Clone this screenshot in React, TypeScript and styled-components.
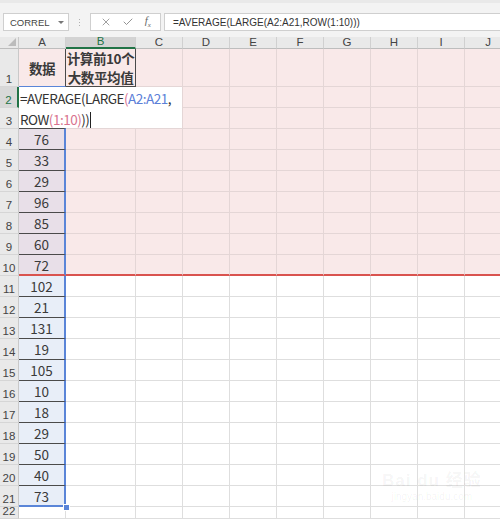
import React from "react";
import styled, { createGlobalStyle } from "styled-components";
import { X, Check } from "lucide-react";

const GlobalStyle = createGlobalStyle`
  body {
    margin: 0;
    background: #ffffff;
  }
`;

const Page = styled.div`
  width: 500px;
  height: 519px;
  overflow: hidden;
  font-family: "Liberation Sans", "Noto Sans CJK SC", sans-serif;
  color: #333;
  position: relative;
`;

const Toolbar = styled.div`
  height: 37px;
  box-sizing: border-box;
  background: linear-gradient(#e9e9e9 0, #e9e9e9 3px, #f3f3f3 3px);
  display: flex;
  align-items: flex-start;
  padding: 13px 0 0 3px;
`;

const NameBox = styled.div`
  width: 66px;
  height: 18px;
  box-sizing: border-box;
  background: #fff;
  border: 1px solid #cfcfcf;
  display: flex;
  align-items: center;
  justify-content: space-between;
  padding: 0 4px 0 6px;
  font-size: 9.5px;
  color: #444;
`;

const Caret = styled.span`
  width: 0;
  height: 0;
  border-left: 3px solid transparent;
  border-right: 3px solid transparent;
  border-top: 3px solid #777;
`;

const Grip = styled.div`
  width: 21px;
  height: 18px;
  display: flex;
  flex-direction: column;
  align-items: center;
  justify-content: center;
  gap: 2px;
  span {
    width: 1px;
    height: 1px;
    background: #b0b0b0;
  }
`;

const IconBox = styled.div`
  width: 71px;
  height: 18px;
  box-sizing: border-box;
  background: #fff;
  border: 1px solid #cfcfcf;
  display: flex;
  align-items: center;
  justify-content: space-around;
  padding: 0 4px;
  color: #777;
`;

const Fx = styled.span`
  font-family: "Liberation Serif", serif;
  font-style: italic;
  font-size: 11px;
  color: #666;
  sub {
    font-size: 7px;
  }
`;

const FormulaBox = styled.div`
  flex: 1;
  margin-left: 3px;
  height: 18px;
  box-sizing: border-box;
  background: #fff;
  border: 1px solid #cfcfcf;
  border-right: none;
  display: flex;
  align-items: center;
  padding-left: 8px;
  font-size: 10px;
  color: #333;
`;

const Sheet = styled.div`
  position: relative;
  display: grid;
  grid-template-columns: 19px 47px 70px repeat(8, 47px);
  grid-template-rows: 12px 38px repeat(20, 21px) 12px;
`;

const Corner = styled.div`
  background: #e9e9e9;
  border-right: 1px solid #c9c9c9;
  border-bottom: 1px solid #bdbdbd;
  box-sizing: border-box;
  position: relative;
  &::after {
    content: "";
    position: absolute;
    right: 2px;
    bottom: 2px;
    border-left: 8px solid transparent;
    border-bottom: 8px solid #bcbcbc;
  }
`;

const ColHead = styled.div<{ $active?: boolean }>`
  box-sizing: border-box;
  background: ${(p) => (p.$active ? "#d3d3d3" : "#e9e9e9")};
  color: ${(p) => (p.$active ? "#217346" : "#444")};
  border-right: 1px solid #d0d0d0;
  border-bottom: ${(p) => (p.$active ? "2px solid #217346" : "1px solid #bdbdbd")};
  display: flex;
  align-items: center;
  justify-content: center;
  font-size: 11.5px;
  line-height: 1;
`;

const RowHead = styled.div<{ $active?: boolean }>`
  box-sizing: border-box;
  background: ${(p) => (p.$active ? "#d8d8d8" : "#e9e9e9")};
  color: ${(p) => (p.$active ? "#217346" : "#444")};
  border-right: ${(p) => (p.$active ? "2px solid #217346" : "1px solid #c9c9c9")};
  border-bottom: 1px solid #d6d6d6;
  display: flex;
  align-items: flex-end;
  justify-content: center;
  padding-bottom: 1px;
  font-size: 11.5px;
  line-height: 1;
`;

const Cell = styled.div<{
  $fill: string;
  $grid: string;
  $right?: string;
  $bottom?: string;
  $bold?: boolean;
}>`
  box-sizing: border-box;
  background: ${(p) => p.$fill};
  border-right: ${(p) => p.$right || `1px solid ${p.$grid}`};
  border-bottom: ${(p) => p.$bottom || `1px solid ${p.$grid}`};
  display: flex;
  align-items: center;
  justify-content: center;
  text-align: center;
  white-space: nowrap;
  overflow: hidden;
  font-family: "Noto Sans CJK SC", sans-serif;
  font-size: 13.5px;
  font-weight: ${(p) => (p.$bold ? 700 : 400)};
  letter-spacing: ${(p) => (p.$bold ? "-0.4px" : "0")};
  line-height: 19px;
  color: #3a3a3a;
  padding-top: 1px;
`;

const EditBox = styled.div`
  position: absolute;
  left: 19px;
  top: 50px;
  width: 163px;
  height: 41px;
  background: #fff;
  box-sizing: border-box;
  padding: 1px 0 0 1px;
  font-family: "Noto Sans CJK SC", sans-serif;
  font-size: 13.5px;
  letter-spacing: -0.5px;
  line-height: 21px;
  color: #333;
  white-space: nowrap;
`;

const Ref = styled.span<{ $tone: "blue" | "red" }>`
  color: ${(p) => (p.$tone === "blue" ? "#5b80d8" : "#d9738f")};
`;

const Cursor = styled.span`
  display: inline-block;
  width: 1px;
  height: 16px;
  background: #222;
  vertical-align: -3px;
  margin-left: 1px;
`;

const Handle = styled.div`
  position: absolute;
  left: 63px;
  top: 467px;
  width: 5px;
  height: 5px;
  background: #5a85d8;
  border: 1px solid #fff;
`;

const Watermark = styled.div`
  position: absolute;
  left: 382px;
  top: 466px;
  color: rgba(0, 0, 0, 0.05);
  display: flex;
  flex-direction: column;
  align-items: center;
  pointer-events: none;
`;

const MarkTitle = styled.div`
  font-family: "Liberation Sans", "Noto Sans CJK SC", sans-serif;
  font-weight: 700;
  font-size: 17px;
  letter-spacing: 1px;
`;

const MarkUrl = styled.div`
  font-family: "Liberation Sans", sans-serif;
  font-size: 10px;
`;

const cols = ["A", "B", "C", "D", "E", "F", "G", "H", "I", "J"];

const values: Record<number, string> = {
  4: "76",
  5: "33",
  6: "29",
  7: "96",
  8: "85",
  9: "60",
  10: "72",
  11: "102",
  12: "21",
  13: "131",
  14: "19",
  15: "105",
  16: "10",
  17: "18",
  18: "29",
  19: "50",
  20: "40",
  21: "73",
};

const PINK = "#f9e9e9";
const PINK_GRID = "#e4d6d6";
const WHITE_GRID = "#dedede";
const DARK = "1px solid #4a4a4a";
const BLUE = "2px solid #5a85d8";
const RED = "2px solid #d9534f";

function cellProps(row: number, ci: number) {
  const pink = row <= 10;
  let fill = pink ? PINK : "#ffffff";
  const grid = pink ? PINK_GRID : WHITE_GRID;
  let right: string | undefined;
  let bottom: string | undefined;
  let text: React.ReactNode = null;
  let bold = false;

  if (ci === 0) {
    if (row === 1) {
      text = "数据";
      bold = true;
      right = DARK;
      bottom = "1px solid #5a85d8";
    } else if (row >= 2 && row <= 21) {
      right = BLUE;
      if (row >= 4 && row <= 10) fill = "#e8dfe8";
      if (row >= 11) fill = "#e8eef8";
      if (row >= 3) bottom = DARK;
      if (row === 21) bottom = BLUE;
      text = values[row] ?? null;
    }
  }
  if (ci === 1 && row === 1) {
    text = (
      <div>
        计算前10个
        <br />
        大数平均值
      </div>
    );
    bold = true;
    right = DARK;
    bottom = DARK;
  }
  if (row === 10) bottom = RED;
  return { fill, grid, right, bottom, text, bold };
}

export default function App() {
  const rows = Array.from({ length: 22 }, (_, i) => i + 1);
  return (
    <Page>
      <GlobalStyle />
      <Toolbar>
        <NameBox>
          CORREL
          <Caret />
        </NameBox>
        <Grip>
          <span />
          <span />
          <span />
        </Grip>
        <IconBox>
          <X size={12} strokeWidth={1.4} />
          <Check size={12} strokeWidth={1.6} />
          <Fx>
            f<sub>x</sub>
          </Fx>
        </IconBox>
        <FormulaBox>=AVERAGE(LARGE(A2:A21,ROW(1:10)))</FormulaBox>
      </Toolbar>
      <Sheet>
        <Corner />
        {cols.map((c) => (
          <ColHead key={c} $active={c === "B"}>
            {c}
          </ColHead>
        ))}
        {rows.map((r) => (
          <React.Fragment key={r}>
            <RowHead $active={r === 2}>{r}</RowHead>
            {cols.map((c, ci) => {
              const p = cellProps(r, ci);
              return (
                <Cell
                  key={c}
                  $fill={p.fill}
                  $grid={p.grid}
                  $right={p.right}
                  $bottom={p.bottom}
                  $bold={p.bold}
                >
                  {p.text}
                </Cell>
              );
            })}
          </React.Fragment>
        ))}
        <EditBox>
          =AVERAGE(LARGE<Ref $tone="red">(</Ref>
          <Ref $tone="blue">A2:A21</Ref>,
          <br />
          ROW<Ref $tone="red">(1:10)</Ref>))
          <Cursor />
        </EditBox>
        <Handle />
      </Sheet>
      <Watermark>
        <MarkTitle>Bai du 经验</MarkTitle>
        <MarkUrl>jingyan.baidu.com</MarkUrl>
      </Watermark>
    </Page>
  );
}
